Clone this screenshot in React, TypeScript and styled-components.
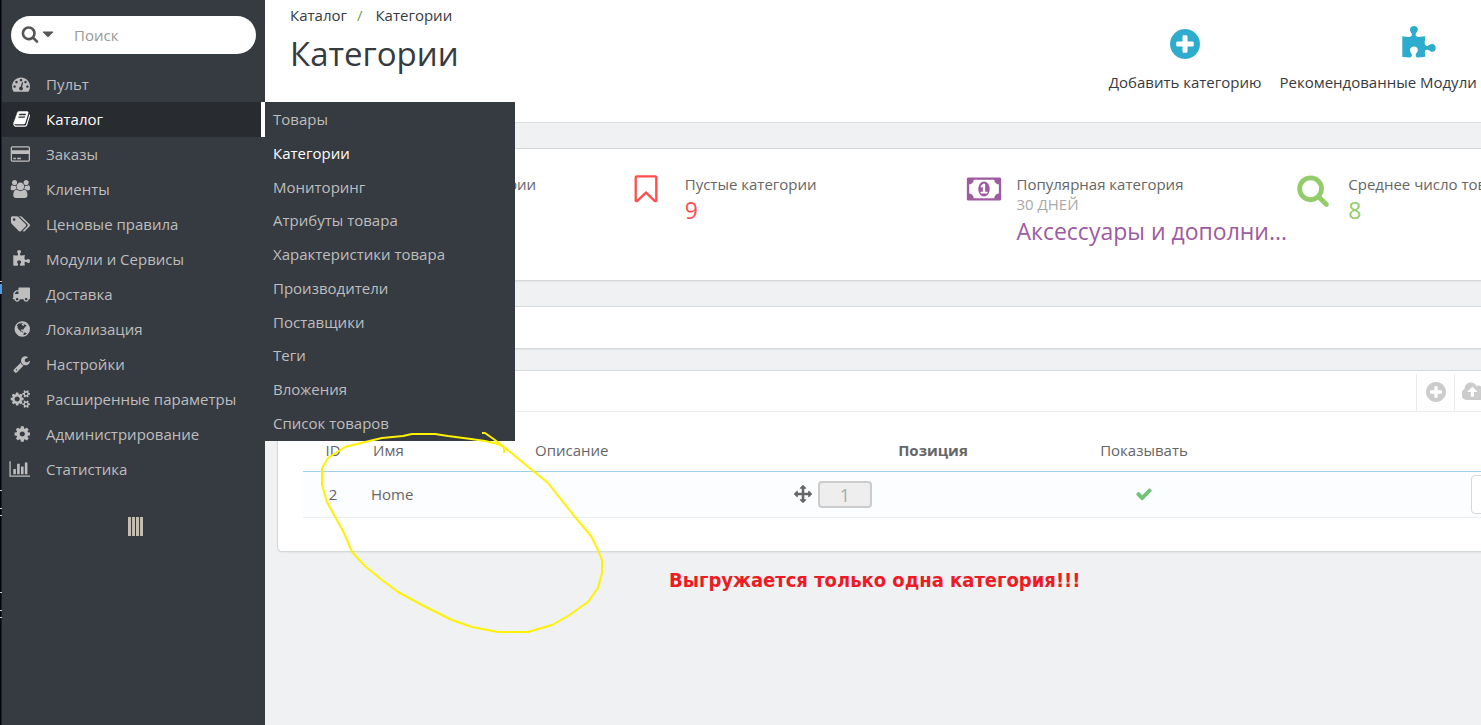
import React from "react";
import styled, { createGlobalStyle, css } from "styled-components";

type Glyph = { x: number; w: number; d: string };

/* Icon outlines on a 1792-unit em, each with the left edge and width of its glyph box. */
const glyphs: Record<string, Glyph> = {
  search: { x: 64, w: 1664, d: "M1216 832q0-185-131.5-316.5t-316.5-131.5-316.5 131.5-131.5 316.5 131.5 316.5 316.5 131.5 316.5-131.5 131.5-316.5zm512 832q0 52-38 90t-90 38q-54 0-90-38l-343-342q-179 124-399 124-143 0-273.5-55.5t-225-150-150-225-55.5-273.5 55.5-273.5 150-225 225-150 273.5-55.5 273.5 55.5 225 150 150 225 55.5 273.5q0 220-124 399l343 343q37 37 37 90z" },
  caret: { x: 384, w: 1024, d: "M1408 704q0 26-19 45l-448 448q-19 19-45 19t-45-19l-448-448q-19-19-19-45t19-45 45-19h896q26 0 45 19t19 45z" },
  dashboard: { x: 0, w: 1792, d: "M384 1152q0-53-37.5-90.5t-90.5-37.5-90.5 37.5-37.5 90.5 37.5 90.5 90.5 37.5 90.5-37.5 37.5-90.5zm192-448q0-53-37.5-90.5t-90.5-37.5-90.5 37.5-37.5 90.5 37.5 90.5 90.5 37.5 90.5-37.5 37.5-90.5zm428 481l101-382q6-26-7.5-48.5t-38.5-29.5-48 6.5-30 39.5l-101 382q-60 5-107 43.5t-63 98.5q-20 77 20 146t117 89 146-20 89-117q16-60-6-117t-72-91zm660-33q0-53-37.5-90.5t-90.5-37.5-90.5 37.5-37.5 90.5 37.5 90.5 90.5 37.5 90.5-37.5 37.5-90.5zm-640-640q0-53-37.5-90.5t-90.5-37.5-90.5 37.5-37.5 90.5 37.5 90.5 90.5 37.5 90.5-37.5 37.5-90.5zm448 192q0-53-37.5-90.5t-90.5-37.5-90.5 37.5-37.5 90.5 37.5 90.5 90.5 37.5 90.5-37.5 37.5-90.5zm320 448q0 261-141 483-19 29-54 29h-1402q-35 0-54-29-141-221-141-483 0-182 71-348t191-286 286-191 348-71 348 71 286 191 191 286 71 348z" },
  book: { x: 64, w: 1664, d: "M1703 478q40 57 18 129l-275 906q-19 64-76.5 107.5t-122.5 43.5h-923q-77 0-148.5-53.5t-99.5-131.5q-24-67-2-127 0-4 3-27t4-37q1-8-3-21.5t-3-19.5q2-11 8-21t16.5-23.5 16.5-23.5q23-38 45-91.5t30-91.5q3-10 .5-30t-.5-28q3-11 17-28t17-23q21-36 42-92t25-90q1-9-2.5-32t.5-28q4-13 22-30.5t22-22.5q19-26 42.5-84.5t27.5-96.5q1-8-3-25.5t-2-26.5q2-8 9-18t18-23 17-21q8-12 16.5-30.5t15-35 16-36 19.5-32 26.5-23.5 36-11.5 47.5 5.5l-1 3q38-9 51-9h761q74 0 114 56t18 130l-274 906q-36 119-71.5 153.5t-128.5 34.5h-869q-27 0-38 15-11 16-1 43 24 70 144 70h923q29 0 56-15.5t35-41.5l300-987q7-22 5-57 38 15 59 43zm-1064 2q-4 13 2 22.5t20 9.5h608q13 0 25.5-9.5t16.5-22.5l21-64q4-13-2-22.5t-20-9.5h-608q-13 0-25.5 9.5t-16.5 22.5zm-83 256q-4 13 2 22.5t20 9.5h608q13 0 25.5-9.5t16.5-22.5l21-64q4-13-2-22.5t-20-9.5h-608q-13 0-25.5 9.5t-16.5 22.5z" },
  card: { x: 0, w: 1920, d: "M1760 128q66 0 113 47t47 113v1216q0 66-47 113t-113 47h-1600q-66 0-113-47t-47-113v-1216q0-66 47-113t113-47h1600zm-1600 128q-13 0-22.5 9.5t-9.5 22.5v224h1664v-224q0-13-9.5-22.5t-22.5-9.5h-1600zm1600 1280q13 0 22.5-9.5t9.5-22.5v-608h-1664v608q0 13 9.5 22.5t22.5 9.5h1600zm-1504-128v-128h256v128h-256zm384 0v-128h384v128h-384z" },
  users: { x: 0, w: 1920, d: "M593 896q-162 5-265 128h-134q-82 0-138-40.5t-56-118.5q0-353 124-353 6 0 43.5 21t97.5 42.5 119 21.5q67 0 133-23-5 37-5 66 0 139 81 256zm1071 637q0 120-73 189.5t-194 69.5h-874q-121 0-194-69.5t-73-189.5q0-53 3.5-103.5t14-109 26.5-108.5 43-97.5 62-81 85.5-53.5 111.5-20q10 0 43 21.5t73 48 107 48 135 21.5 135-21.5 107-48 73-48 43-21.5q61 0 111.5 20t85.5 53.5 62 81 43 97.5 26.5 108.5 14 109 3.5 103.5zm-1024-1277q0 106-75 181t-181 75-181-75-75-181 75-181 181-75 181 75 75 181zm704 384q0 159-112.5 271.5t-271.5 112.5-271.5-112.5-112.5-271.5 112.5-271.5 271.5-112.5 271.5 112.5 112.5 271.5zm576 225q0 78-56 118.5t-138 40.5h-134q-103-123-265-128 81-117 81-256 0-29-5-66 66 23 133 23 59 0 119-21.5t97.5-42.5 43.5-21q124 0 124 353zm-128-609q0 106-75 181t-181 75-181-75-75-181 75-181 181-75 181 75 75 181z" },
  tags: { x: 0, w: 1899, d: "M448 448q0-53-37.5-90.5t-90.5-37.5-90.5 37.5-37.5 90.5 37.5 90.5 90.5 37.5 90.5-37.5 37.5-90.5zm1067 576q0 53-37 90l-491 492q-39 37-91 37-53 0-90-37l-715-716q-38-37-64.5-101t-26.5-117v-416q0-52 38-90t90-38h416q53 0 117 26.5t102 64.5l715 714q37 39 37 91zm384 0q0 53-37 90l-491 492q-39 37-91 37-36 0-59-14t-53-45l470-470q37-37 37-90 0-52-37-91l-715-714q-38-38-102-64.5t-117-26.5h224q53 0 117 26.5t102 64.5l715 714q37 39 37 91z" },
  puzzle: { x: 64, w: 1664, d: "M1728 1098q0 81-44.5 135t-123.5 54q-41 0-77.5-17.5t-59-38-56.5-38-71-17.5q-110 0-110 124 0 39 16 115t15 115v5q-22 0-33 1-34 3-97.5 11.5t-115.5 13.5-98 5q-61 0-103-26.5t-42-83.5q0-37 17.5-71t38-56.5 38-59 17.5-77.5q0-79-54-123.5t-135-44.5q-84 0-143 45.5t-59 127.5q0 43 15 83t33.5 64.5 33.5 53 15 50.5q0 45-46 89-37 35-117 35-95 0-245-24-9-2-27.5-4t-27.5-4l-13-2q-1 0-3-1-2 0-2-1v-1024q2 1 17.5 3.5t34 5 21.5 3.5q150 24 245 24 80 0 117-35 46-44 46-89 0-22-15-50.5t-33.5-53-33.5-64.5-15-83q0-82 59-127.5t144-45.5q80 0 134 44.5t54 123.5q0 41-17.5 77.5t-38 59-38 56.5-17.5 71q0 57 42 83.5t103 26.5q64 0 180-15t163-17v2q-1 2-3.5 17.5t-5 34-3.5 21.5q-24 150-24 245 0 80 35 117 44 46 89 46 22 0 50.5-15t53-33.5 64.5-33.5 83-15q82 0 127.5 59t45.5 143z" },
  truck: { x: 64, w: 1728, d: "M640 1408q0-52-38-90t-90-38-90 38-38 90 38 90 90 38 90-38 38-90zm-384-512h384v-256h-158q-13 0-22 9l-195 195q-9 9-9 22v30zm1280 512q0-52-38-90t-90-38-90 38-38 90 38 90 90 38 90-38 38-90zm256-1088v1024q0 15-4 26.5t-13.5 18.5-16.5 11.5-23.5 6-22.5 2-25.5 0-22.5-.5q0 106-75 181t-181 75-181-75-75-181h-384q0 106-75 181t-181 75-181-75-75-181h-64q-3 0-22.5.5t-25.5 0-22.5-2-23.5-6-16.5-11.5-13.5-18.5-4-26.5q0-26 19-45t45-19v-320q0-8-.5-35t0-38 2.5-34.5 6.5-37 14-30.5 22.5-30l198-198q19-19 50.5-32t58.5-13h160v-192q0-26 19-45t45-19h1024q26 0 45 19t19 45z" },
  globe: { x: 128, w: 1536, d: "M896 128q209 0 385.5 103t279.5 279.5 103 385.5-103 385.5-279.5 279.5-385.5 103-385.5-103-279.5-279.5-103-385.5 103-385.5 279.5-279.5 385.5-103zm274 521q-2 1-9.5 9.5t-13.5 9.5q2 0 4.5-5t5-11 3.5-7q6-7 22-15 14-6 52-12 34-8 51 11-2-2 9.5-13t14.5-12q3-2 15-4.5t15-7.5l2-22q-12 1-17.5-7t-6.5-21q0 2-6 8 0-7-4.5-8t-11.5 1-9 1q-10-3-15-7.5t-8-16.5-4-15q-2-5-9.5-11t-9.5-10q-1-2-2.5-5.5t-3-6.5-4-5.5-5.5-2.5-7 5-7.5 10-4.5 5q-3-2-6-1.5t-4.5 1-4.5 3-5 3.5q-3 2-8.5 3t-8.5 2q15-5-1-11-10-4-16-3 9-4 7.5-12t-8.5-14h5q-1-4-8.5-8.5t-17.5-8.5-13-6q-8-5-34-9.5t-33-.5q-5 6-4.5 10.5t4 14 3.5 12.5q1 6-5.5 13t-6.5 12q0 7 14 15.5t10 21.5q-3 8-16 16t-16 12q-5 8-1.5 18.5t10.5 16.5q2 2 1.5 4t-3.5 4.5-5.5 4-6.5 3.5l-3 2q-11 5-20.5-6t-13.5-26q-7-25-16-30-23-8-29 1-5-13-41-26-25-9-58-4 6-1 0-15-7-15-19-12 3-6 4-17.5t1-13.5q3-13 12-23 1-1 7-8.5t9.5-13.5.5-6q35 4 50-11 5-5 11.5-17t10.5-17q9-6 14-5.5t14.5 5.5 14.5 5q14 1 15.5-11t-7.5-20q12 1 3-17-4-7-8-9-12-4-27 5-8 4 2 8-1-1-9.5 10.5t-16.5 17.5-16-5q-1-1-5.5-13.5t-9.5-13.5q-8 0-16 15 3-8-11-15t-24-8q19-12-8-27-7-4-20.5-5t-19.5 4q-5 7-5.5 11.5t5 8 10.5 5.5 11.5 4 8.5 3q14 10 8 14-2 1-8.5 3.5t-11.5 4.5-6 4q-3 4 0 14t-2 14q-5-5-9-17.5t-7-16.5q7 9-25 6l-10-1q-4 0-16 2t-20.5 1-13.5-8q-4-8 0-20 1-4 4-2-4-3-11-9.5t-10-8.5q-46 15-94 41 6 1 12-1 5-2 13-6.5t10-5.5q34-14 42-7l5-5q14 16 20 25-7-4-30-1-20 6-22 12 7 12 5 18-4-3-11.5-10t-14.5-11-15-5q-16 0-22 1-146 80-235 222 7 7 12 8 4 1 5 9t2.5 11 11.5-3q9 8 3 19 1-1 44 27 19 17 21 21 3 11-10 18-1-2-9-9t-9-4q-3 5 .5 18.5t10.5 12.5q-7 0-9.5 16t-2.5 35.5-1 23.5l2 1q-3 12 5.5 34.5t21.5 19.5q-13 3 20 43 6 8 8 9 3 2 12 7.5t15 10 10 10.5q4 5 10 22.5t14 23.5q-2 6 9.5 20t10.5 23q-1 0-2.5 1t-2.5 1q3 7 15.5 14t15.5 13q1 3 2 10t3 11 8 2q2-20-24-62-15-25-17-29-3-5-5.5-15.5t-4.5-14.5q2 0 6 1.5t8.5 3.5 7.5 4 2 3q-3 7 2 17.5t12 18.5 17 19 12 13q6 6 14 19.5t0 13.5q9 0 20 10.5t17 19.5q5 8 8 26t5 24q2 7 8.5 13.5t12.5 9.5l16 8 13 7q5 2 18.5 10.5t21.5 11.5q10 4 16 4t14.5-2.5 13.5-3.5q15-2 29 15t21 21q36 19 55 11-2 1 .5 7.5t8 15.5 9 14.5 5.5 8.5q5 6 18 15t18 15q6-4 7-9-3 8 7 20t18 10q14-3 14-32-31 15-49-18 0-1-2.5-5.5t-4-8.5-2.5-8.5 0-7.5 5-3q9 0 10-3.5t-2-12.5-4-13q-1-8-11-20t-12-15q-5 9-16 8t-16-9q0 1-1.5 5.5t-1.5 6.5q-13 0-15-1 1-3 2.5-17.5t3.5-22.5q1-4 5.5-12t7.5-14.5 4-12.5-4.5-9.5-17.5-2.5q-19 1-26 20-1 3-3 10.5t-5 11.5-9 7q-7 3-24 2t-24-5q-13-8-22.5-29t-9.5-37q0-10 2.5-26.5t3-25-5.5-24.5q3-2 9-9.5t10-10.5q2-1 4.5-1.5t4.5 0 4-1.5 3-6q-1-1-4-3-3-3-4-3 7 3 28.5-1.5t27.5 1.5q15 11 22-2 0-1-2.5-9.5t-.5-13.5q5 27 29 9 3 3 15.5 5t17.5 5q3 2 7 5.5t5.5 4.5 5-.5 8.5-6.5q10 14 12 24 11 40 19 44 7 3 11 2t4.5-9.5 0-14-1.5-12.5l-1-8v-18l-1-8q-15-3-18.5-12t1.5-18.5 15-18.5q1-1 8-3.5t15.5-6.5 12.5-8q21-19 15-35 7 0 11-9-1 0-5-3t-7.5-5-4.5-2q9-5 2-16 5-3 7.5-11t7.5-10q9 12 21 2 8-8 1-16 5-7 20.5-10.5t18.5-9.5q7 2 8-2t1-12 3-12q4-5 15-9t13-5l17-11q3-4 0-4 18 2 31-11 10-11-6-20 3-6-3-9.5t-15-5.5q3-1 11.5-.5t10.5-1.5q15-10-7-16-17-5-43 12zm-163 877q206-36 351-189-3-3-12.5-4.5t-12.5-3.5q-18-7-24-8 1-7-2.5-13t-8-9-12.5-8-11-7q-2-2-7-6t-7-5.5-7.5-4.5-8.5-2-10 1l-3 1q-3 1-5.5 2.5t-5.5 3-4 3 0 2.5q-21-17-36-22-5-1-11-5.5t-10.5-7-10-1.5-11.5 7q-5 5-6 15t-2 13q-7-5 0-17.5t2-18.5q-3-6-10.5-4.5t-12 4.5-11.5 8.5-9 6.5-8.5 5.5-8.5 7.5q-3 4-6 12t-5 11q-2-4-11.5-6.5t-9.5-5.5q2 10 4 35t5 38q7 31-12 48-27 25-29 40-4 22 12 26 0 7-8 20.5t-7 21.5q0 6 2 16z" },
  wrench: { x: 64, w: 1664, d: "M448 1472q0-26-19-45t-45-19-45 19-19 45 19 45 45 19 45-19 19-45zm644-420l-682 682q-37 37-90 37-52 0-91-37l-106-108q-38-36-38-90 0-53 38-91l681-681q39 98 114.5 173.5t173.5 114.5zm634-435q0 39-23 106-47 134-164.5 217.5t-258.5 83.5q-185 0-316.5-131.5t-131.5-316.5 131.5-316.5 316.5-131.5q58 0 121.5 16.5t107.5 46.5q16 11 16 28t-16 28l-293 169v224l193 107q5-3 79-48.5t135.5-81 70.5-35.5q15 0 23.5 10t8.5 25z" },
  cogs: { x: 0, w: 1856, d: "M832 896q0-106-75-181t-181-75-181 75-75 181 75 181 181 75 181-75 75-181zm768 512q0-52-38-90t-90-38-90 38-38 90q0 53 37.5 90.5t90.5 37.5 90.5-37.5 37.5-90.5zm0-1024q0-52-38-90t-90-38-90 38-38 90q0 53 37.5 90.5t90.5 37.5 90.5-37.5 37.5-90.5zm-384 421v185q0 10-7 19.5t-16 10.5l-155 24q-11 35-32 76 34 48 90 115 7 11 7 20 0 12-7 19-23 30-82.5 89.5t-78.5 59.5q-11 0-21-7l-115-90q-37 19-77 31-11 108-23 155-7 24-30 24h-186q-11 0-20-7.5t-10-17.5l-23-153q-34-10-75-31l-118 89q-7 7-20 7-11 0-21-8-144-133-144-160 0-9 7-19 10-14 41-53t47-61q-23-44-35-82l-152-24q-10-1-17-9.5t-7-19.5v-185q0-10 7-19.5t16-10.5l155-24q11-35 32-76-34-48-90-115-7-11-7-20 0-12 7-20 22-30 82-89t79-59q11 0 21 7l115 90q34-18 77-32 11-108 23-154 7-24 30-24h186q11 0 20 7.5t10 17.5l23 153q34 10 75 31l118-89q8-7 20-7 11 0 21 8 144 133 144 160 0 8-7 19-12 16-42 54t-45 60q23 48 34 82l152 23q10 2 17 10.5t7 19.5zm640 533v140q0 16-149 31-12 27-30 52 51 113 51 138 0 4-4 7-122 71-124 71-8 0-46-47t-52-68q-20 2-30 2t-30-2q-14 21-52 68t-46 47q-2 0-124-71-4-3-4-7 0-25 51-138-18-25-30-52-149-15-149-31v-140q0-16 149-31 13-29 30-52-51-113-51-138 0-4 4-7 4-2 35-20t59-34 30-16q8 0 46 46.5t52 67.5q20-2 30-2t30 2q51-71 92-112l6-2q4 0 124 70 4 3 4 7 0 25-51 138 17 23 30 52 149 15 149 31zm0-1024v140q0 16-149 31-12 27-30 52 51 113 51 138 0 4-4 7-122 71-124 71-8 0-46-47t-52-68q-20 2-30 2t-30-2q-14 21-52 68t-46 47q-2 0-124-71-4-3-4-7 0-25 51-138-18-25-30-52-149-15-149-31v-140q0-16 149-31 13-29 30-52-51-113-51-138 0-4 4-7 4-2 35-20t59-34 30-16q8 0 46 46.5t52 67.5q20-2 30-2t30 2q51-71 92-112l6-2q4 0 124 70 4 3 4 7 0 25-51 138 17 23 30 52 149 15 149 31z" },
  cog: { x: 128, w: 1536, d: "M1152 896q0-106-75-181t-181-75-181 75-75 181 75 181 181 75 181-75 75-181zm512-109v222q0 12-8 23t-20 13l-185 28q-19 54-39 91 35 50 107 138 10 12 10 25t-9 23q-27 37-99 108t-94 71q-12 0-26-9l-138-108q-44 23-91 38-16 136-29 186-7 28-36 28h-222q-14 0-24.5-8.5t-11.5-21.5l-28-184q-49-16-90-37l-141 107q-10 9-25 9-14 0-25-11-126-114-165-168-7-10-7-23 0-12 8-23 15-21 51-66.5t54-70.5q-27-50-41-99l-183-27q-13-2-21-12.5t-8-23.5v-222q0-12 8-23t19-13l186-28q14-46 39-92-40-57-107-138-10-12-10-24 0-10 9-23 26-36 98.5-107.5t94.5-71.5q13 0 26 10l138 107q44-23 91-38 16-136 29-186 7-28 36-28h222q14 0 24.5 8.5t11.5 21.5l28 184q49 16 90 37l142-107q9-9 24-9 13 0 25 10 129 119 165 170 7 8 7 22 0 12-8 23-15 21-51 66.5t-54 70.5q26 50 41 98l183 28q13 2 21 12.5t8 23.5z" },
  chart: { x: 0, w: 2048, d: "M640 896v512h-256v-512h256zm384-512v1024h-256v-1024h256zm1024 1152v128h-2048v-1536h128v1408h1920zm-640-896v768h-256v-768h256zm384-384v1152h-256v-1152h256z" },
  plus: { x: 128, w: 1536, d: "M1344 960v-128q0-26-19-45t-45-19h-256v-256q0-26-19-45t-45-19h-128q-26 0-45 19t-19 45v256h-256q-26 0-45 19t-19 45v128q0 26 19 45t45 19h256v256q0 26 19 45t45 19h128q26 0 45-19t19-45v-256h256q26 0 45-19t19-45zm320-64q0 209-103 385.5t-279.5 279.5-385.5 103-385.5-103-279.5-279.5-103-385.5 103-385.5 279.5-279.5 385.5-103 385.5 103 279.5 279.5 103 385.5z" },
  bookmark: { x: 256, w: 1280, d: "M1408 256h-1024v1242l423-406 89-85 89 85 423 406v-1242zm12-128q23 0 44 9 33 13 52.5 41t19.5 62v1289q0 34-19.5 62t-52.5 41q-19 8-44 8-48 0-83-32l-441-424-441 424q-36 33-83 33-23 0-44-9-33-13-52.5-41t-19.5-62v-1289q0-34 19.5-62t52.5-41q21-9 44-9h1048z" },
  money: { x: 0, w: 1920, d: "M768 1152h384v-96h-128v-448h-114l-148 137 77 80q42-37 55-57h2v288h-128v96zm512-256q0 70-21 142t-59.5 134-101.5 101-138 39-138-39-101.5-101-59.5-134-21-142 21-142 59.5-134 101.5-101 138-39 138 39 101.5 101 59.5 134 21 142zm512 256v-512q-106 0-181-75t-75-181h-1152q0 106-75 181t-181 75v512q106 0 181 75t75 181h1152q0-106 75-181t181-75zm128-832v1152q0 26-19 45t-45 19h-1792q-26 0-45-19t-19-45v-1152q0-26 19-45t45-19h1792q26 0 45 19t19 45z" },
  cloud: { x: 0, w: 1920, d: "M1216 864q0-14-9-23l-352-352q-9-9-23-9t-23 9l-351 351q-10 12-10 24 0 14 9 23t23 9h224v352q0 13 9.5 22.5t22.5 9.5h192q13 0 22.5-9.5t9.5-22.5v-352h224q13 0 22.5-9.5t9.5-22.5zm640 288q0 159-112.5 271.5t-271.5 112.5h-1088q-185 0-316.5-131.5t-131.5-316.5q0-130 70-240t188-165q-2-30-2-43 0-212 150-362t362-150q156 0 285.5 87t188.5 231q71-62 166-62 106 0 181 75t75 181q0 76-41 138 130 31 213.5 135.5t83.5 238.5z" },
  arrows: { x: 0, w: 1792, d: "M1792 896q0 26-19 45l-256 256q-19 19-45 19t-45-19-19-45v-128h-384v384h128q26 0 45 19t19 45-19 45l-256 256q-19 19-45 19t-45-19l-256-256q-19-19-19-45t19-45 45-19h128v-384h-384v128q0 26-19 45t-45 19-45-19l-256-256q-19-19-19-45t19-45l256-256q19-19 45-19t45 19 19 45v128h384v-384h-128q-26 0-45-19t-19-45 19-45l256-256q19-19 45-19t45 19l256 256q19 19 19 45t-19 45-45 19h-128v384h384v-128q0-26 19-45t45-19 45 19l256 256q19 19 19 45z" },
  check: { x: 121, w: 1550, d: "M1671 566q0 40-28 68l-724 724-136 136q-28 28-68 28t-68-28l-136-136-362-362q-28-28-28-68t28-68l136-136q28-28 68-28t68 28l294 295 656-657q28-28 68-28t68 28l136 136q28 28 28 68z" },
};

const Icon = ({ name, width, height, align = "xMid" }: { name: string; width: number; height: number; align?: "xMin" | "xMid" | "xMax" }) => {
  const g = glyphs[name];
  return (
    <svg width={width} height={height} viewBox={`${g.x} 0 ${g.w} 1792`} preserveAspectRatio={`${align}YMid meet`} fill="currentColor" aria-hidden="true">
      <path d={g.d} />
    </svg>
  );
};

const GlobalStyle = createGlobalStyle`
  * { box-sizing: border-box; }
  body {
    margin: 0;
    overflow: hidden;
    background: #eff1f2;
    color: #666;
    font: 15px/20px "Open Sans", "Noto Sans", sans-serif;
  }
  a { color: inherit; text-decoration: none; }
  ul { margin: 0; padding: 0; list-style: none; }
  svg { display: block; flex: none; }
  button, input { font: inherit; color: inherit; }
`;

const Page = styled.div`
  position: relative;
  display: flex;
  min-height: 100vh;
  overflow: hidden;
`;

const Sidebar = styled.nav`
  position: relative;
  z-index: 2;
  flex: none;
  width: 265px;
  padding-top: 16px;
  background: #363a41;
  color: #bebebe;
`;

const WindowEdge = styled.svg`
  position: absolute;
  z-index: 1;
  top: 0;
  left: 0;
`;

const SearchBox = styled.form`
  display: flex;
  align-items: center;
  height: 38px;
  margin: 0 9px 13px 11px;
  padding: 0 10px;
  border-radius: 19px;
  background: #fff;
`;

const SearchScope = styled.button`
  display: flex;
  align-items: center;
  gap: 3px;
  padding: 0 0 2px;
  border: 0;
  background: none;
  color: #555;
`;

const SearchInput = styled.input`
  flex: 1;
  min-width: 0;
  margin-left: 20px;
  padding: 0;
  border: 0;
  outline: 0;
  background: none;
  &::placeholder { color: #999; opacity: 1; }
`;

const MenuItem = styled.li<{ $active?: boolean }>`
  position: relative;
  ${(p) => p.$active && css`
    background: #282b30;
    color: #fff;
    &::after {
      content: "";
      position: absolute;
      inset: 0 0 0 auto;
      width: 4px;
      background: #fff;
    }
  `}
`;

const MenuLink = styled.a`
  display: flex;
  align-items: center;
  gap: 16px;
  height: 35px;
  padding: 0 0 2px 8px;
`;

const Submenu = styled.ul`
  position: absolute;
  top: 0;
  left: 100%;
  display: flex;
  flex-direction: column;
  width: 250px;
  height: 339px;
  padding: 1px 0;
  background: #363a41;
  color: #bebebe;
`;

const SubmenuItem = styled.li<{ $active?: boolean }>`
  display: flex;
  flex: 1;
  align-items: center;
  padding: 0 0 1px 8px;
  color: ${(p) => (p.$active ? "#fff" : "inherit")};
`;

const CollapseButton = styled.button`
  display: block;
  margin: 30px auto 0;
  padding: 0 0 0 5px;
  border: 0;
  background: none;
`;

const Main = styled.main`
  flex: none;
  width: calc(100% - 79px);
`;

const Header = styled.header`
  display: flex;
  justify-content: space-between;
  height: 123px;
  padding: 5px 109px 0 25px;
  border-bottom: 1px solid #d8dcde;
  background: #fff;
  color: #363a41;
`;

const Breadcrumb = styled.nav`
  display: flex;
  gap: 10px;
`;

const Slash = styled.span`
  margin-right: 3px;
  color: #72a053;
`;

const Title = styled.h1`
  margin: 4px 0 0;
  font-size: 33px;
  line-height: 50px;
  font-weight: 400;
`;

const Actions = styled.div`
  display: flex;
  gap: 18px;
  padding-top: 21px;
`;

const Action = styled.a`
  display: flex;
  flex-direction: column;
  align-items: center;
  gap: 10px;
  white-space: nowrap;
  svg { color: #2eacce; }
`;

const Content = styled.div`
  padding: 25px 12px 0;
`;

const Panel = styled.section`
  border: 1px solid #d3d8db;
  border-radius: 5px;
  background: #fff;
  box-shadow: 0 1px 2px rgba(0, 0, 0, 0.06);
`;

const Stats = styled(Panel)`
  display: grid;
  grid-template-columns: repeat(4, 1fr);
  height: 133px;
  margin-bottom: 25px;
  padding: 24px 25px 0 24px;
`;

const Stat = styled.div<{ $color: string }>`
  display: grid;
  grid-template-columns: 51px 1fr;
  align-content: start;
  align-items: start;
  color: ${(p) => p.$color};
`;

const StatText = styled.div`
  padding-top: 1px;
  white-space: nowrap;
`;

const StatTitle = styled.div`
  color: #666;
`;

const StatPeriod = styled.div`
  line-height: 21px;
  color: #a9a9a9;
`;

const StatValue = styled.div`
  font-size: 23px;
  line-height: 32px;
`;

const PathPanel = styled(Panel)`
  height: 43px;
  margin-bottom: 21px;
`;

const ListPanel = styled(Panel)`
  padding-bottom: 33px;
`;

const ListHead = styled.div`
  display: flex;
  justify-content: flex-end;
  height: 41px;
  padding: 3px 162px 0 0;
  border-bottom: 1px solid #eaedef;
`;

const ToolButton = styled.button`
  display: grid;
  place-items: center;
  width: 38px;
  padding: 0 0 2px;
  border: 0;
  border-left: 1px solid #eaedef;
  background: none;
  color: #ccc;
`;

const TableWrap = styled.div`
  padding: 0 25px;
`;

const Table = styled.table`
  width: 100%;
  border-collapse: collapse;
  table-layout: fixed;
  text-align: left;
`;

const Th = styled.th<{ $bold?: boolean; $center?: boolean }>`
  height: 59px;
  padding: 28px 10px 10px;
  border-bottom: 1px solid #a0d0eb;
  font-weight: ${(p) => (p.$bold ? 700 : 400)};
  text-align: ${(p) => (p.$center ? "center" : "left")};
`;

const Td = styled.td<{ $center?: boolean }>`
  height: 46px;
  padding: 3px 8px;
  border-bottom: 1px solid #eaedef;
  background: #fcfdfe;
  text-align: ${(p) => (p.$center ? "center" : "left")};
`;

const Enabled = styled.a`
  display: flex;
  justify-content: center;
  color: #72c279;
`;

const Position = styled.div`
  display: flex;
  align-items: center;
  gap: 6px;
  padding-left: 1px;
`;

const PositionBadge = styled.span`
  width: 54px;
  height: 27px;
  border: 2px solid #ccc;
  border-radius: 4px;
  background: #eee;
  color: #aaa;
  font-size: 18px;
  line-height: 24px;
  text-align: center;
`;

const RowButton = styled.button`
  display: block;
  width: 150px;
  height: 39px;
  margin-left: auto;
  border: 1px solid #d8d8d8;
  border-radius: 4px;
  background: #fff;
`;

const Annotation = styled.div`
  position: absolute;
  z-index: 3;
  top: 0;
  left: 0;
  pointer-events: none;
`;

const Note = styled.p`
  position: absolute;
  top: 568px;
  left: 669px;
  margin: 0;
  color: #ed1c24;
  font: 700 20px/24px "DejaVu Sans Condensed", "DejaVu Sans", sans-serif;
  white-space: nowrap;
`;

const submenu = ["Товары", "Категории", "Мониторинг", "Атрибуты товара", "Характеристики товара", "Производители", "Поставщики", "Теги", "Вложения", "Список товаров"];

const menu = [
  ["dashboard", "Пульт"],
  ["book", "Каталог"],
  ["card", "Заказы"],
  ["users", "Клиенты"],
  ["tags", "Ценовые правила"],
  ["puzzle", "Модули и Сервисы"],
  ["truck", "Доставка"],
  ["globe", "Локализация"],
  ["wrench", "Настройки"],
  ["cogs", "Расширенные параметры"],
  ["cog", "Администрирование"],
  ["chart", "Статистика"],
];

export default function App() {
  return (
    <>
      <GlobalStyle />
      <Page>
        <Sidebar>
          <WindowEdge width="2" height="725" aria-hidden="true">
            <path d="M0 0h1v725h-1z" fill="#05050f" />
            <path d="M1 0h1v725h-1z" fill="#1d1f26" />
            <path d="M0 284h2v10h-2z" fill="#4f9bdc" />
            <path d="M0 281h2v1h-2zM0 490h2v1h-2zM0 508h2v1h-2zM0 515h2v1h-2zM0 592h2v1h-2zM0 610h2v1h-2zM0 617h2v1h-2z" fill="#d0d0d0" />
          </WindowEdge>
          <SearchBox>
            <SearchScope type="button" aria-label="Поиск">
              <Icon name="search" width={18} height={18} />
              <Icon name="caret" width={12} height={18} />
            </SearchScope>
            <SearchInput type="text" placeholder="Поиск" aria-label="Поиск" />
          </SearchBox>
          <ul>
            {menu.map(([icon, label]) => (
              <MenuItem key={icon} $active={icon === "book"}>
                <MenuLink href="#">
                  <Icon name={icon} width={22} height={18} align="xMax" />
                  {label}
                </MenuLink>
                {icon === "book" && (
                  <Submenu>
                    {submenu.map((s) => (
                      <SubmenuItem key={s} $active={s === "Категории"}>
                        <a href="#">{s}</a>
                      </SubmenuItem>
                    ))}
                  </Submenu>
                )}
              </MenuItem>
            ))}
          </ul>
          <CollapseButton type="button" aria-label="Свернуть меню">
            <svg width="15" height="19" viewBox="0 0 15 19" fill="#c4bdb4" aria-hidden="true">
              <path d="M0 0h3v19h-3zM4 0h3v19h-3zM8 0h3v19h-3zM12 0h3v19h-3z" />
            </svg>
          </CollapseButton>
        </Sidebar>

        <Main>
          <Header>
            <div>
              <Breadcrumb>
                <a href="#">Каталог</a>
                <Slash>/</Slash>
                <a href="#">Категории</a>
              </Breadcrumb>
              <Title>Категории</Title>
            </div>
            <Actions>
              <Action href="#">
                <Icon name="plus" width={30} height={36} />
                Добавить категорию
              </Action>
              <Action href="#">
                <Icon name="puzzle" width={34} height={36} />
                Рекомендованные Модули и Сервисы
              </Action>
            </Actions>
          </Header>
          <Content>
            <Stats>
              <Stat $color="#1f9bc9">
                <span />
                <StatText>
                  <StatTitle>Отключенные категории</StatTitle>
                </StatText>
              </Stat>
              <Stat $color="#ff4c4c">
                <Icon name="bookmark" width={24} height={32} />
                <StatText>
                  <StatTitle>Пустые категории</StatTitle>
                  <StatValue>9</StatValue>
                </StatText>
              </Stat>
              <Stat $color="#9e5ba1">
                <Icon name="money" width={36} height={32} />
                <StatText>
                  <StatTitle>Популярная категория</StatTitle>
                  <StatPeriod>30 ДНЕЙ</StatPeriod>
                  <StatValue>Аксессуары и дополни...</StatValue>
                </StatText>
              </Stat>
              <Stat $color="#92cc6b">
                <Icon name="search" width={32} height={34} />
                <StatText>
                  <StatTitle>Среднее число товаров</StatTitle>
                  <StatValue>8</StatValue>
                </StatText>
              </Stat>
            </Stats>
            <PathPanel />
            <ListPanel>
              <ListHead>
                <ToolButton type="button" aria-label="Добавить">
                  <Icon name="plus" width={20} height={24} />
                </ToolButton>
                <ToolButton type="button" aria-label="Экспорт">
                  <Icon name="cloud" width={24} height={24} />
                </ToolButton>
              </ListHead>
              <TableWrap>
                <Table>
                  <colgroup>
                    <col style={{ width: 60 }} />
                    <col style={{ width: 162 }} />
                    <col style={{ width: 260 }} />
                    <col style={{ width: 296 }} />
                    <col style={{ width: 126 }} />
                    <col />
                  </colgroup>
                  <thead>
                    <tr>
                      <Th $center>ID</Th>
                      <Th>Имя</Th>
                      <Th>Описание</Th>
                      <Th $center $bold>Позиция</Th>
                      <Th $center>Показывать</Th>
                      <Th />
                    </tr>
                  </thead>
                  <tbody>
                    <tr>
                      <Td $center>2</Td>
                      <Td>Home</Td>
                      <Td />
                      <Td>
                        <Position>
                          <Icon name="arrows" width={18} height={18} />
                          <PositionBadge>1</PositionBadge>
                        </Position>
                      </Td>
                      <Td $center>
                        <Enabled href="#" aria-label="Включено">
                          <Icon name="check" width={16} height={18} />
                        </Enabled>
                      </Td>
                      <Td>
                        <RowButton type="button" aria-label="Просмотр" />
                      </Td>
                    </tr>
                  </tbody>
                </Table>
              </TableWrap>
            </ListPanel>
          </Content>
        </Main>

        <Annotation>
          <svg width="620" height="650" viewBox="0 0 620 650" fill="none" stroke="#fff200" strokeWidth="2" strokeLinejoin="round" aria-hidden="true">
            <path d="M482 433L485 433L495 440L504 447V453M504 447L498 444L485 441L471 439L448 436L435 434H412L403 436L382 438L365 442L345 447L328 458L322 468V485L327 502L333 513L344 533L352 552L365 566L382 580L398 592L422 605L452 620L472 627L498 632H528L552 625L568 616L588 602L598 588L602 573V560L598 550L591 536L575 517L548 483L532 470L504 447" />
          </svg>
          <Note>Выгружается только одна категория!!!</Note>
        </Annotation>
      </Page>
    </>
  );
}
